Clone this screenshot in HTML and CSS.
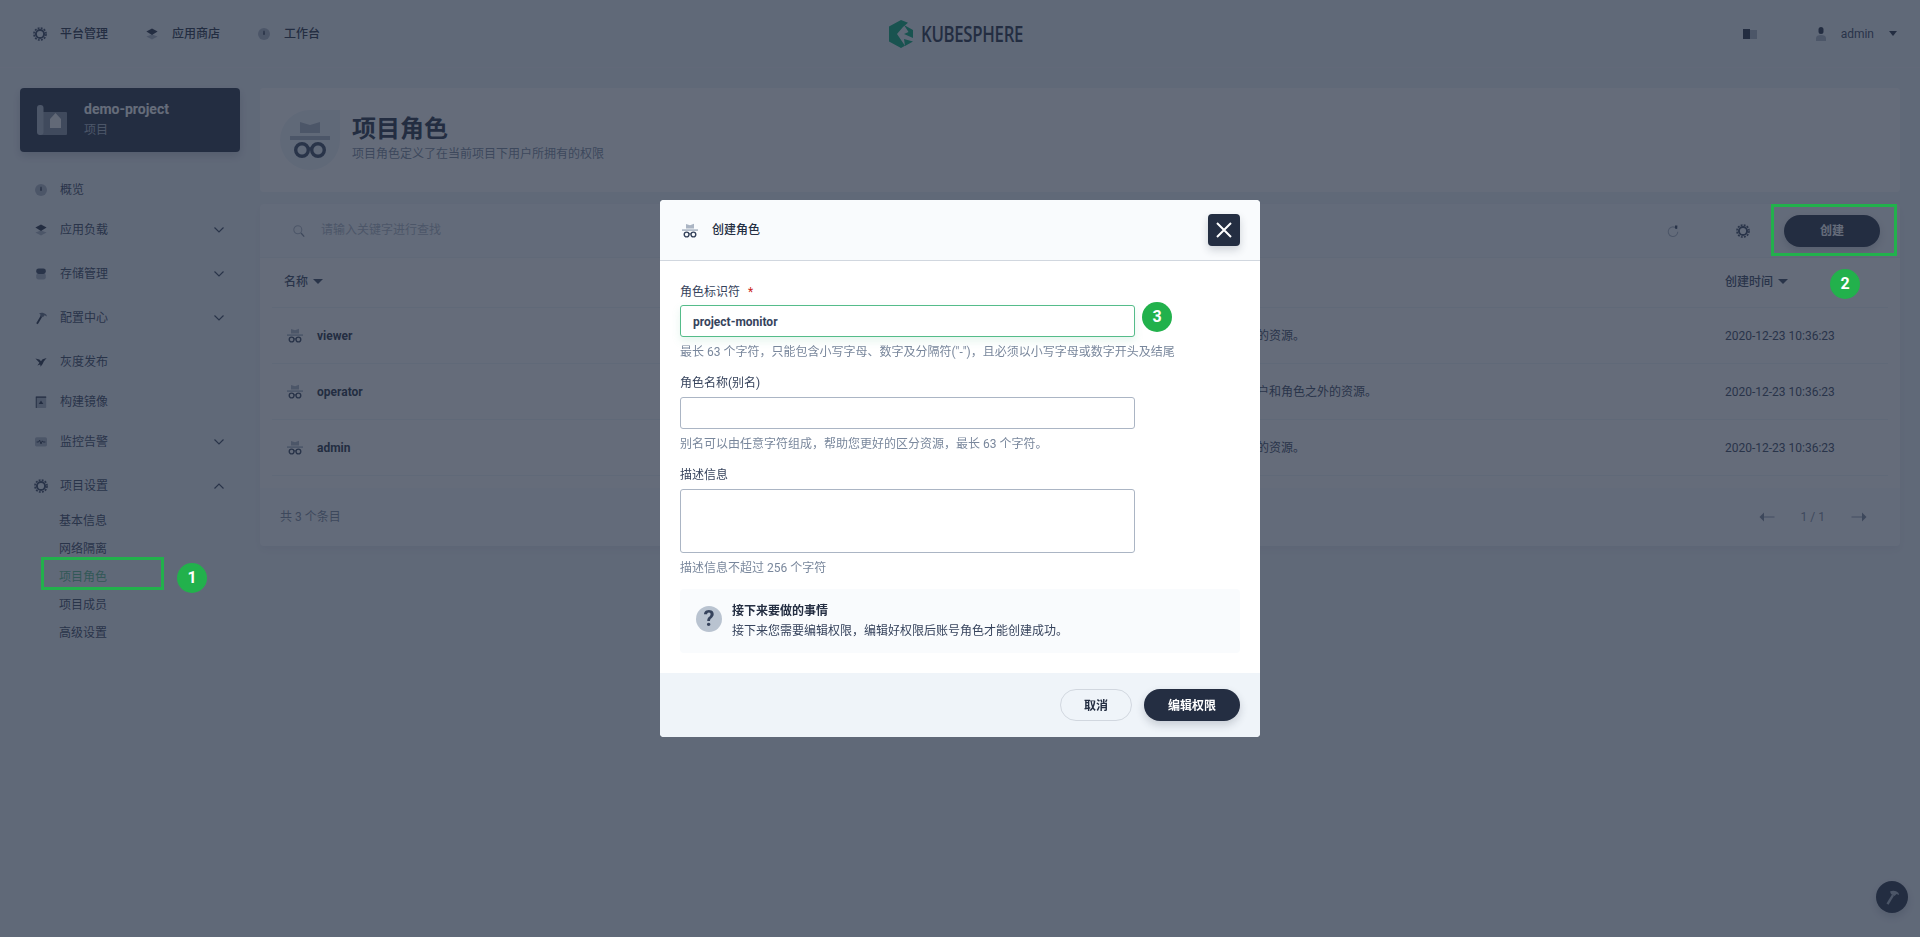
FILE: index.html
```html
<!DOCTYPE html>
<html lang="zh-CN">
<head>
  <meta charset="UTF-8">
  <meta name="viewport" content="width=device-width, initial-scale=1.0">
  <title>项目角色 - KubeSphere</title>
  <link rel="stylesheet" href="styles.css">
</head>
<body>

  <svg class="defs" width="0" height="0">
    <symbol id="i-gear" viewBox="-1 -1 18 18">
      <circle cx="8" cy="8" r="4.600" fill="none" stroke="#36435c" stroke-width="2.200"/>
      <circle cx="8" cy="8" r="6.800" fill="none" stroke="#36435c" stroke-width="1.800" stroke-dasharray="2.200 1.360"/>
    </symbol>
    <symbol id="i-layers" viewBox="-2 -2 20 20">
      <path d="M8 8.500 15 11.200 8 15 1 11.200z" fill="#abb5c4"/>
      <path d="M8 1 15 5 8 9.200 1 5z" fill="#242e42"/>
    </symbol>
    <symbol id="i-dash" viewBox="-2 -2 20 20">
      <circle cx="8" cy="8" r="7.500" fill="#abb5c4"/>
      <path d="M7.300 4h1.400l.3 5H7z" fill="#242e42"/>
    </symbol>
    <symbol id="i-db" viewBox="-2 -2 20 20">
      <rect x="2" y="7" width="12" height="8" rx="3" fill="#abb5c4"/>
      <rect x="2" y="1" width="12" height="7" rx="3" fill="#36435c"/>
    </symbol>
    <symbol id="i-hammer" viewBox="-2 -2 20 20">
      <path d="M2 14.500 7.600 5.200 9.600 6.400 4 15.700z" fill="#242e42"/>
      <path d="M5.500 2.500C8 .8 11 1 14.500 3.500L15.500 6 12.500 4.600 10.500 7 6.800 4.800 7.400 3.600z" fill="#5f6c80"/>
    </symbol>
    <symbol id="i-bird" viewBox="-2 -2 20 20">
      <path d="M1 3.500 6 5 8 7 10 4.500 15 3 11.500 7.500 10 10.500 7.500 14 7 11 3.500 12.500 6 9z" fill="#242e42"/>
    </symbol>
    <symbol id="i-image" viewBox="-2 -2 20 20">
      <rect x="1.500" y="1" width="13" height="14.500" rx="1" fill="#abb5c4"/>
      <path d="M1.500 1h13v1.600H2.600v12.900H1.500z" fill="#242e42"/>
      <path d="M8 6 11 10.500H5z" fill="#242e42"/>
    </symbol>
    <symbol id="i-monitor" viewBox="-2 -2 20 20">
      <rect x=".5" y="2" width="15" height="11.500" rx="2" fill="#abb5c4"/>
      <path d="M2.500 8H5L6.300 5.600 8 10.400 9.600 6.600 10.600 8H13.500" fill="none" stroke="#242e42" stroke-width="1.200"/>
    </symbol>
    <symbol id="i-hat" viewBox="10 12 40 34">
      <path d="M20 13 30 16 40 12V24H20z" fill="#abb5c4"/>
      <rect x="10" y="26" width="40" height="4" fill="#abb5c4"/>
      <circle cx="21.500" cy="39" r="6" fill="none" stroke="#36435c" stroke-width="3.400"/>
      <circle cx="38.500" cy="39" r="6" fill="none" stroke="#36435c" stroke-width="3.400"/>
      <path d="M27 37.500h6" stroke="#36435c" stroke-width="2.400"/>
    </symbol>
    <symbol id="i-chevron" viewBox="0 0 16 16">
      <path d="M3.500 5.500 8 10 12.500 5.500" fill="none" stroke="#36435c" stroke-width="1.200"/>
    </symbol>
    <symbol id="i-search" viewBox="-2 -2 20 20">
      <circle cx="6.500" cy="6.500" r="5" fill="none" stroke="#abb5c4" stroke-width="1.300"/>
      <path d="M10.500 10.500 14.500 15" stroke="#7b8699" stroke-width="1.600"/>
    </symbol>
    <symbol id="i-refresh" viewBox="-2 -2 20 20">
      <path d="M12.600 5A6 6 0 1 0 14 9" fill="none" stroke="#abb5c4" stroke-width="1.300"/>
      <path d="M10.500 1 13.500 1 13.200 5.400 10.500 5z" fill="#36435c"/>
    </symbol>
    <symbol id="i-arrow" viewBox="0 0 16 16">
      <path d="M15.500 8H4" stroke="#abb5c4" stroke-width="1.400"/>
      <path d="M5 3.500V12.500L.5 8z" fill="#7b8699"/>
    </symbol>
  </svg>

  <header class="topbar">
    <nav class="topnav">
      <a class="topnav-item"><svg class="ico"><use href="#i-gear"/></svg>平台管理</a>
      <a class="topnav-item"><svg class="ico"><use href="#i-layers"/></svg>应用商店</a>
      <a class="topnav-item"><svg class="ico"><use href="#i-dash"/></svg>工作台</a>
    </nav>
    <div class="logo">
      <svg class="logo-mark" viewBox="0 0 24 28">
        <path d="M12 0 0 6.500V21.500L12 28 16 25.800 8 14 14 7 19 2.700z" fill="#00aa72"/>
        <path d="M15 5 24 10V14.500L19.500 12zM15 14 24 10V18zM15 19 24 21.500 16 26z" fill="#00aa72"/>
      </svg>
      <span class="logo-text">KUBESPHERE</span>
    </div>
    <div class="topright">
      <svg class="book" viewBox="0 0 14 10">
        <rect width="7" height="10" fill="#242e42"/>
        <rect x="7" y="1" width="7" height="9" fill="#abb5c4"/>
      </svg>
      <span class="user">
        <svg class="user-ico" viewBox="0 0 10 14">
          <rect x="2.500" width="5" height="7" rx="2.500" fill="#242e42"/>
          <path d="M0 14V11C0 9 2 8 5 8S10 9 10 11V14z" fill="#abb5c4"/>
        </svg>
        admin
      </span>
      <i class="caret caret-lg"></i>
    </div>
  </header>

  <div class="layout">
    <aside class="sidebar">
      <div class="project-card">
        <svg class="project-ico" viewBox="0 0 30 30">
          <rect x="2" y="7" width="28" height="23" rx="1" fill="#abb5c4" opacity=".7"/>
          <rect width="6.500" height="30" rx="3" fill="#abb5c4"/>
          <path d="M13 14 18.500 8 24 14V23H13z" fill="#fff" opacity=".9"/>
        </svg>
        <div>
          <div class="project-name">demo-project</div>
          <div class="project-type">项目</div>
        </div>
      </div>

      <ul class="menu">
        <li class="menu-item"><svg class="ico"><use href="#i-dash"/></svg>概览</li>
        <li class="menu-item has-sub"><svg class="ico"><use href="#i-layers"/></svg>应用负载<svg class="chev"><use href="#i-chevron"/></svg></li>
        <li class="menu-item has-sub"><svg class="ico"><use href="#i-db"/></svg>存储管理<svg class="chev"><use href="#i-chevron"/></svg></li>
        <li class="menu-item has-sub"><svg class="ico"><use href="#i-hammer"/></svg>配置中心<svg class="chev"><use href="#i-chevron"/></svg></li>
        <li class="menu-item"><svg class="ico"><use href="#i-bird"/></svg>灰度发布</li>
        <li class="menu-item"><svg class="ico"><use href="#i-image"/></svg>构建镜像</li>
        <li class="menu-item has-sub"><svg class="ico"><use href="#i-monitor"/></svg>监控告警<svg class="chev"><use href="#i-chevron"/></svg></li>
        <li class="menu-item"><svg class="ico"><use href="#i-gear"/></svg>项目设置<svg class="chev chev-up"><use href="#i-chevron"/></svg></li>
      </ul>
      <ul class="submenu">
        <li>基本信息</li>
        <li>网络隔离</li>
        <li class="active">项目角色</li>
        <li>项目成员</li>
        <li>高级设置</li>
      </ul>
    </aside>

    <main class="content">
      <section class="hero">
        <div class="hero-ico">
          <svg viewBox="0 0 60 60">
            <path d="M20 12 30 15 40 12V23H20z" fill="#abb5c4"/>
            <rect x="10" y="26" width="40" height="4" fill="#abb5c4"/>
            <circle cx="22" cy="40" r="6.300" fill="none" stroke="#36435c" stroke-width="3.400"/>
            <circle cx="38" cy="40" r="6.300" fill="none" stroke="#36435c" stroke-width="3.400"/>
            <path d="M28 38.500h4" stroke="#36435c" stroke-width="2.400"/>
          </svg>
        </div>
        <div class="hero-text">
          <h1 class="hero-title">项目角色</h1>
          <p class="hero-desc">项目角色定义了在当前项目下用户所拥有的权限</p>
        </div>
      </section>

      <section class="panel">
        <div class="toolbar">
          <svg class="search-ico"><use href="#i-search"/></svg>
          <span class="search-text">请输入关键字进行查找</span>
          <svg class="tool-ico refresh"><use href="#i-refresh"/></svg>
          <svg class="tool-ico gear"><use href="#i-gear"/></svg>
          <button class="btn btn-dark btn-create">创建</button>
        </div>

        <div class="table">
          <div class="row row-head">
            <div class="cell">名称<i class="caret"></i></div>
            <div class="cell"></div>
            <div class="cell">创建时间<i class="caret"></i></div>
          </div>
          <div class="row">
            <div class="cell cell-name"><svg class="hat"><use href="#i-hat"/></svg>viewer</div>
            <div class="cell">项目观察者，可以查看项目下所有的资源。</div>
            <div class="cell">2020-12-23 10:36:23</div>
          </div>
          <div class="row">
            <div class="cell cell-name"><svg class="hat"><use href="#i-hat"/></svg>operator</div>
            <div class="cell">项目维护者，可以管理项目下除用户和角色之外的资源。</div>
            <div class="cell">2020-12-23 10:36:23</div>
          </div>
          <div class="row">
            <div class="cell cell-name"><svg class="hat"><use href="#i-hat"/></svg>admin</div>
            <div class="cell">项目管理员，可以管理项目下所有的资源。</div>
            <div class="cell">2020-12-23 10:36:23</div>
          </div>
        </div>

        <div class="pager">
          <span>共 3 个条目</span>
          <div class="pager-nav">
            <svg class="pager-arrow"><use href="#i-arrow"/></svg>
            <span>1 / 1</span>
            <svg class="pager-arrow flip"><use href="#i-arrow"/></svg>
          </div>
        </div>
      </section>
    </main>
  </div>

  <button class="tool-fab">
    <svg viewBox="0 0 16 16" width="16" height="16">
      <path d="M2.500 14.500 8 5.500 10 6.700 4.500 15.700z" fill="#abb5c4"/>
      <path d="M6 2.500C9 1 12 1.500 14.500 4L15 6 12.500 5 10.500 7 7 5z" fill="#abb5c4"/>
    </svg>
  </button>

  <div class="mask">
    <div class="modal">
      <div class="modal-head">
        <svg class="modal-ico"><use href="#i-hat"/></svg>
        <span class="modal-title">创建角色</span>
        <button class="modal-close">
          <svg viewBox="0 0 20 20" width="20" height="20">
            <path d="M3 3 17 17M17 3 3 17" stroke="#fff" stroke-width="2"/>
          </svg>
        </button>
      </div>

      <div class="modal-body">
        <div class="field">
          <label class="field-label">角色标识符<span class="required">*</span></label>
          <input class="input input-focus" value="project-monitor">
          <p class="field-hint">最长 63 个字符，只能包含小写字母、数字及分隔符("-")，且必须以小写字母或数字开头及结尾</p>
        </div>
        <div class="field">
          <label class="field-label">角色名称(别名)</label>
          <input class="input">
          <p class="field-hint">别名可以由任意字符组成，帮助您更好的区分资源，最长 63 个字符。</p>
        </div>
        <div class="field">
          <label class="field-label">描述信息</label>
          <textarea class="input textarea"></textarea>
          <p class="field-hint">描述信息不超过 256 个字符</p>
        </div>
        <div class="tip">
          <span class="tip-ico">?</span>
          <div>
            <div class="tip-title">接下来要做的事情</div>
            <div class="tip-text">接下来您需要编辑权限，编辑好权限后账号角色才能创建成功。</div>
          </div>
        </div>
      </div>

      <div class="modal-foot">
        <button class="btn btn-light">取消</button>
        <button class="btn btn-dark btn-edit">编辑权限</button>
      </div>
    </div>
  </div>

  <div class="mark-box mark-box-1"></div>
  <div class="mark-box mark-box-2"></div>
  <div class="mark-num mark-num-1">1</div>
  <div class="mark-num mark-num-2">2</div>
  <div class="mark-num mark-num-3">3</div>

</body>
</html>
```

FILE: styles.css
```css
* {
  box-sizing: border-box;
}

html, body {
  height: 100%;
}

body {
  margin: 0;
  overflow: hidden;
  font-family: Roboto, 'Noto Sans CJK SC', sans-serif;
  font-size: 12px;
  line-height: 20px;
  color: #242e42;
  background-color: #eff4f9;
}

ul {
  list-style: none;
  margin: 0;
  padding: 0;
}

button {
  font-family: inherit;
  border: none;
  cursor: pointer;
}

.defs {
  position: absolute;
}

.ico {
  width: 16px;
  height: 16px;
  flex: none;
}

/* top bar */
.topbar {
  display: grid;
  grid-template-columns: 1fr auto 1fr;
  align-items: center;
  height: 68px;
  padding: 0 20px 0 32px;
  border-bottom: 1px solid #f3f6fa;
}

.topnav {
  display: flex;
  gap: 36px;
}

.topnav-item {
  display: flex;
  align-items: center;
  gap: 12px;
  font-weight: 500;
}

.logo {
  display: flex;
  align-items: center;
  gap: 8px;
  width: 154px;
}

.logo-mark {
  width: 24px;
  height: 28px;
  flex: none;
}

.logo-text {
  font-family: 'Open Sans', sans-serif;
  font-size: 21px;
  font-weight: 600;
  letter-spacing: -.4px;
  color: #242e42;
  transform: scaleX(.8);
  transform-origin: left center;
}

.topright {
  display: flex;
  align-items: center;
  justify-content: flex-end;
}

.book {
  width: 14px;
  height: 10px;
  margin-right: 59px;
}

.user {
  display: flex;
  align-items: center;
  gap: 15px;
  color: #36435c;
}

.user-ico {
  width: 10px;
  height: 14px;
}

.caret {
  display: inline-block;
  margin-left: 5px;
  border-left: 5px solid transparent;
  border-right: 5px solid transparent;
  border-top: 5px solid #36435c;
  vertical-align: 1px;
}

.caret-lg {
  margin-left: 15px;
  margin-right: 3px;
  border-left-width: 4.5px;
  border-right-width: 4.5px;
  border-top-color: #242e42;
}

/* page */
.layout {
  display: flex;
  gap: 20px;
  padding: 20px 20px 0;
}

.sidebar {
  width: 220px;
  flex: none;
}

.project-card {
  display: flex;
  align-items: center;
  gap: 17px;
  height: 64px;
  padding: 0 17px;
  background-color: #242e42;
  border-radius: 4px;
  box-shadow: 0 4px 8px rgba(35, 45, 65, .2);
  color: #fff;
}

.project-ico {
  width: 30px;
  height: 30px;
  flex: none;
}

.project-name {
  font-size: 14px;
  font-weight: 700;
  line-height: 18px;
  color: #fff;
}

.project-type {
  margin-top: 2px;
  color: #abb5c4;
}

.menu {
  margin-top: 18px;
}

.menu-item {
  display: flex;
  align-items: center;
  gap: 11px;
  height: 40px;
  padding: 0 13px;
  color: #36435c;
}

.menu-item.has-sub {
  margin-bottom: 4px;
}

.chev {
  width: 16px;
  height: 16px;
  margin-left: auto;
}

.chev-up {
  transform: rotate(180deg);
}

.submenu {
  margin-top: 1px;
  padding-left: 39px;
  color: #36435c;
}

.submenu li {
  height: 28px;
  line-height: 28px;
}

.submenu .active {
  color: #55bc8a;
}

.content {
  flex: 1;
  min-width: 0;
}

.hero {
  display: flex;
  align-items: center;
  gap: 12px;
  height: 104px;
  margin-bottom: 12px;
  padding: 0 20px;
  background-color: #fff;
  border-radius: 4px;
}

.hero-ico {
  width: 60px;
  height: 60px;
  flex: none;
  background-color: #eff4f9;
  border-radius: 50% 0 50% 50%;
}

.hero-ico svg {
  display: block;
  width: 60px;
  height: 60px;
}

.hero-text {
  margin-bottom: 4px;
}

.hero-title {
  margin: 0;
  font-size: 24px;
  font-weight: 700;
  line-height: 32px;
}

.hero-desc {
  margin: 0;
  line-height: 18px;
  color: #79879c;
}

.panel {
  background-color: #f9fbfd;
  border-radius: 4px;
  box-shadow: 0 4px 8px rgba(36, 46, 66, .06);
}

.toolbar {
  display: flex;
  align-items: center;
  height: 54px;
  padding: 0 20px 0 31px;
  border-bottom: 1px solid #eff4f9;
}

.search-ico {
  width: 16px;
  height: 16px;
}

.search-text {
  margin-left: 14px;
  margin-bottom: 2px;
  color: #abb5c4;
}

.tool-ico {
  width: 16px;
  height: 16px;
}

.refresh {
  margin-left: auto;
  margin-right: 54px;
}

.gear {
  margin-right: 33px;
}

.btn {
  height: 32px;
  border-radius: 16px;
  font-size: 12px;
  font-weight: 700;
  padding: 0 0 2px;
}

.btn-dark {
  background-color: #242e42;
  color: #fff;
  box-shadow: 0 4px 8px rgba(36, 46, 66, .2);
}

.btn-light {
  width: 72px;
  background-color: #eff4f9;
  border: 1px solid #d1d7df;
  color: #242e42;
}

.btn-create,
.btn-edit {
  width: 96px;
}

.table {
  padding: 0 12px 12px;
  background-color: #fff;
}

.row {
  display: grid;
  grid-template-columns: 793px 648px 174px;
  align-items: center;
  height: 56px;
  border-bottom: 1px solid #eff4f9;
  color: #36435c;
}

.row-head {
  height: 50px;
  padding-bottom: 2px;
  font-weight: 500;
}

.cell {
  display: flex;
  align-items: center;
  padding: 0 12px;
}

.cell-name {
  padding-left: 15px;
  font-weight: 700;
  color: #242e42;
}

.hat {
  width: 16px;
  height: 15px;
  margin-right: 14px;
  flex: none;
}

.pager {
  display: flex;
  align-items: center;
  justify-content: space-between;
  height: 58px;
  padding: 0 33px 0 20px;
  color: #79879c;
}

.pager-nav {
  display: flex;
  align-items: center;
  gap: 26px;
}

.pager-arrow {
  width: 16px;
  height: 16px;
}

.flip {
  transform: scaleX(-1);
}

.tool-fab {
  position: fixed;
  right: 12px;
  bottom: 24px;
  display: flex;
  align-items: center;
  justify-content: center;
  width: 32px;
  height: 32px;
  padding: 0;
  background-color: #242e42;
  border-radius: 50%;
  box-shadow: 0 4px 8px rgba(36, 46, 66, .2);
}

/* modal */
.mask {
  position: fixed;
  inset: 0;
  display: flex;
  justify-content: center;
  align-items: flex-start;
  padding-top: 200px;
  background-color: rgba(35, 45, 65, .7);
}

.modal {
  width: 600px;
  background-color: #fff;
  border-radius: 4px;
  overflow: hidden;
}

.modal-head {
  display: flex;
  align-items: center;
  height: 61px;
  padding: 0 20px;
  background-color: #f9fbfd;
  border-bottom: 1px solid #d1d7df;
}

.modal-ico {
  width: 16px;
  height: 15px;
  margin-left: 2px;
  margin-right: 14px;
}

.modal-title {
  font-weight: 500;
}

.modal-close {
  display: flex;
  align-items: center;
  justify-content: center;
  width: 32px;
  height: 32px;
  margin-left: auto;
  padding: 0;
  background-color: #242e42;
  border-radius: 4px;
  box-shadow: 0 4px 8px rgba(36, 46, 66, .2);
}

.modal-body {
  padding: 20px;
}

.field {
  margin-bottom: 12px;
}

.field-label {
  display: block;
  margin-bottom: 3px;
  padding-top: 1px;
  color: #36435c;
}

.field + .field .field-label {
  margin-bottom: 4px;
  padding-top: 0;
}

.required {
  margin-left: 8px;
  color: #ca2621;
}

.input {
  display: block;
  width: 455px;
  height: 32px;
  padding: 2px 12px 0;
  font-family: inherit;
  font-size: 12px;
  font-weight: 700;
  color: #36435c;
  background-color: #fff;
  border: 1px solid #abb5c4;
  border-radius: 3px;
  outline: none;
}

.input-focus {
  border-color: #55bc8a;
  box-shadow: 0 4px 8px rgba(85, 188, 138, .15);
}

.textarea {
  height: 64px;
  resize: none;
}

.field-hint {
  height: 20px;
  margin: 4px 0 0;
  padding-top: 1px;
  color: #79879c;
  white-space: nowrap;
}

.tip {
  display: flex;
  align-items: center;
  gap: 10px;
  height: 64px;
  padding: 0 16px;
  background-color: #f9fbfd;
  border-radius: 4px;
}

.tip-ico {
  width: 26px;
  height: 26px;
  flex: none;
  margin-bottom: 4px;
  background-color: #b9c3d0;
  border-radius: 50%;
  text-align: center;
  font-size: 22px;
  font-weight: 700;
  line-height: 26px;
  color: #36435c;
}

.tip-title {
  font-weight: 700;
  color: #242e42;
}

.tip-text {
  color: #36435c;
}

.modal-foot {
  display: flex;
  justify-content: flex-end;
  gap: 12px;
  height: 64px;
  padding: 16px 20px;
  background-color: #eff4f9;
}

/* numbered annotations on top of the shot */
.mark-box {
  position: fixed;
  border: 3px solid #22b14c;
}

.mark-box-1 {
  left: 41px;
  top: 557px;
  width: 123px;
  height: 33px;
}

.mark-box-2 {
  left: 1771px;
  top: 204px;
  width: 126px;
  height: 52px;
}

.mark-num {
  position: fixed;
  width: 30px;
  height: 30px;
  background-color: #22b14c;
  border-radius: 50%;
  text-align: center;
  font-size: 16px;
  font-weight: 700;
  line-height: 30px;
  color: #fff;
}

.mark-num-1 {
  left: 177px;
  top: 563px;
}

.mark-num-2 {
  left: 1830px;
  top: 269px;
}

.mark-num-3 {
  left: 1142px;
  top: 302px;
}
```
